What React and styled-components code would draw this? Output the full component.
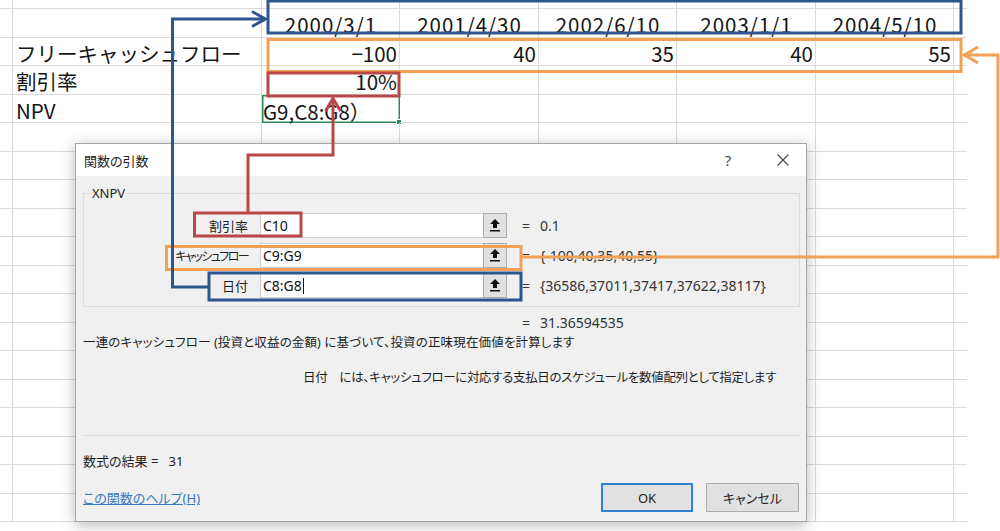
import React from 'react'
import styled, { createGlobalStyle } from 'styled-components'

const GlobalStyle = createGlobalStyle`
  html, body {
    margin: 0;
    padding: 0;
    background: #fff;
  }
  body {
    font-family: "Noto Sans CJK JP", sans-serif;
  }
`

const COLS = [13, 249, 138, 139, 138, 139, 138, 13]
const ROW_COUNT = 19

const Page = styled.div`
  position: relative;
  width: 1000px;
  height: 531px;
  overflow: hidden;
  background: #fff;
`

const Sheet = styled.div`
  display: grid;
  grid-template-columns: ${COLS.map(c => c + 'px').join(' ')};
  grid-template-rows: 9px repeat(${ROW_COUNT - 1}, 28.5px);
  width: 967px;
  font-family: "Noto Sans CJK JP", sans-serif;
  font-size: 20.5px;
  color: #151515;
`

const Cell = styled.div`
  position: relative;
  box-sizing: border-box;
  border-bottom: 1px solid #dadada;
  border-right: ${({ $last }) => ($last ? 'none' : '1px solid #dadada')};
  display: flex;
  align-items: flex-end;
  justify-content: ${({ $align }) =>
    $align === 'right' ? 'flex-end' : $align === 'center' ? 'center' : 'flex-start'};
  padding: 0 2px 2px 3px;
  line-height: 1;
  letter-spacing: ${({ $align }) => ($align === 'center' ? '1px' : '0')};
  white-space: nowrap;
  min-width: 0;
`

const SelectedCell = styled(Cell)`
  border: none;
  box-shadow: inset 0 0 0 1.5px #2f8a55;
  padding-left: 1px;
  &::after {
    content: '';
    position: absolute;
    right: -2px;
    bottom: -2px;
    width: 4px;
    height: 4px;
    background: #2f8a55;
    border: 1px solid #fff;
  }
`

const Dialog = styled.div`
  position: absolute;
  left: 75px;
  top: 143px;
  width: 732px;
  box-sizing: border-box;
  border: 1px solid #a7a7a7;
  background: #f0f0f0;
  box-shadow: 0 3px 14px rgba(0, 0, 0, 0.28);
  font-family: "Noto Sans", "Noto Sans CJK JP", sans-serif;
  font-feature-settings: "palt";
  font-size: 13px;
  color: #1e1e1e;
`

const TitleBar = styled.div`
  display: flex;
  align-items: center;
  height: 32px;
  background: #fff;
  padding-left: 8px;
`

const Title = styled.div`
  flex: 1;
  font-size: 13px;
`

const TitleButton = styled.div`
  width: 46px;
  height: 32px;
  display: flex;
  align-items: center;
  justify-content: center;
  color: #4a4a4a;
  font-size: 15px;
  margin-right: ${({ $gap }) => $gap || 0}px;
`

const Body = styled.div`
  padding: 0 6px 9px 7px;
`

const GroupBox = styled.fieldset`
  margin: 9px 0 0;
  padding: 0 0 8px 0;
  border: 1px solid #dcdcdc;
  min-width: 0;
`

const Legend = styled.legend`
  margin-left: 7px;
  padding: 0 1px;
  line-height: 16px;
  font-size: 13px;
`

const ArgGrid = styled.div`
  margin-top: 12px;
  display: grid;
  grid-template-columns: 176px 223px 24px 33px 1fr;
  grid-auto-rows: 25px;
  row-gap: 5px;
`

const ArgLabel = styled.div`
  display: flex;
  align-items: center;
  justify-content: flex-end;
  padding-right: 12px;
  font-size: ${({ $tight }) => ($tight ? '12px' : '13px')};
  letter-spacing: ${({ $tight }) => ($tight ? '-1.6px' : '0')};
`

const ArgInput = styled.div`
  display: flex;
  align-items: center;
  background: #fff;
  border: 1px solid #cfcfcf;
  border-right: none;
  padding-left: 2px;
  font-size: 14px;
  color: #111;
`

const Caret = styled.span`
  display: inline-block;
  width: 1px;
  height: 16px;
  background: #111;
  margin-left: 1px;
`

const RefButton = styled.div`
  display: flex;
  align-items: center;
  justify-content: center;
  background: #e1e1e1;
  border: 1px solid #adadad;
`

const Equals = styled.div`
  display: flex;
  align-items: center;
  padding-left: 15px;
  font-size: 14px;
  color: #333;
`

const ArgValue = styled.div`
  display: flex;
  align-items: center;
  font-size: 14px;
  color: #333;
  white-space: nowrap;
`

const ResultRow = styled.div`
  margin-top: 7px;
  height: 18px;
  line-height: 18px;
  padding-left: 439px;
  font-size: 14px;
  color: #333;
  span {
    display: inline-block;
    width: 18px;
  }
`

const Desc = styled.div`
  margin-top: ${({ $top }) => $top}px;
  padding-left: ${({ $indent }) => $indent || 0}px;
  height: 18px;
  line-height: 18px;
  font-size: 12.5px;
  letter-spacing: ${({ $spacing }) => $spacing || 0}px;
  white-space: nowrap;
`

const Separator = styled.div`
  margin-top: 48px;
  height: 1px;
  background: #dcdcdc;
`

const FormulaResult = styled.div`
  margin-top: 16px;
  height: 18px;
  line-height: 18px;
  font-size: 13px;
`

const Footer = styled.div`
  margin-top: 13px;
  height: 29px;
  display: flex;
  align-items: center;
  padding-right: 1px;
`

const HelpLink = styled.a`
  flex: 1;
  color: #3a78c2;
  text-decoration: underline;
  font-size: 13px;
`

const Button = styled.div`
  box-sizing: border-box;
  width: ${({ $w }) => $w}px;
  height: 29px;
  display: flex;
  align-items: center;
  justify-content: center;
  background: #e1e1e1;
  border: ${({ $primary }) => ($primary ? '2px solid #2f83d6' : '1px solid #adadad')};
  margin-left: ${({ $gap }) => $gap || 0}px;
  font-size: 13px;
  color: #1e1e1e;
`

const Overlay = styled.svg`
  position: absolute;
  left: 0;
  top: 0;
  width: 1000px;
  height: 531px;
  pointer-events: none;
`

const BLUE = '#2f5590'
const RED = '#b9474a'
const ORANGE = '#f2a055'

const dates = ['2000/3/1', '2001/4/30', '2002/6/10', '2003/1/1', '2004/5/10']
const flows = ['−100', '40', '35', '40', '55']

const sheetRows = Array.from({ length: ROW_COUNT }, (_, r) => {
  const row = Array(8).fill(null)
  if (r === 1) dates.forEach((d, i) => (row[i + 2] = { text: d, align: 'center' }))
  if (r === 2) {
    row[1] = { text: 'フリーキャッシュフロー' }
    flows.forEach((f, i) => (row[i + 2] = { text: f, align: 'right' }))
  }
  if (r === 3) {
    row[1] = { text: '割引率' }
    row[2] = { text: '10%', align: 'right' }
  }
  if (r === 4) {
    row[1] = { text: 'NPV' }
    row[2] = { text: 'G9,C8:G8）', selected: true }
  }
  return row
})

const args = [
  { label: '割引率', ref: 'C10', value: '0.1' },
  { label: 'キャッシュフロー', ref: 'C9:G9', value: '{-100,40,35,40,55}', tight: true },
  { label: '日付', ref: 'C8:G8', value: '{36586,37011,37417,37622,38117}', caret: true },
]

function RefIcon() {
  return (
    <svg width="10" height="13" viewBox="0 0 10 13">
      <path d="M5 0 L10 5 L7 5 L7 9 L3 9 L3 5 L0 5 Z" fill="#111" />
      <rect x="0" y="11" width="10" height="1.5" fill="#111" />
    </svg>
  )
}

function CloseIcon() {
  return (
    <svg width="12" height="12" viewBox="0 0 12 12">
      <path d="M0.5 0.5 L11.5 11.5 M11.5 0.5 L0.5 11.5" stroke="#444" strokeWidth="1.1" />
    </svg>
  )
}

function Annotations() {
  const line = { fill: 'none', strokeWidth: 3 }
  return (
    <Overlay viewBox="0 0 1000 531">
      <rect x="268" y="1" width="693" height="32" stroke={BLUE} {...line} />
      <rect x="268" y="39.5" width="693" height="32" stroke={ORANGE} {...line} />
      <rect x="268" y="73" width="131" height="23" stroke={RED} {...line} />

      <rect x="194.5" y="213" width="106.5" height="23" stroke={RED} {...line} />
      <rect x="166.5" y="246.5" width="354.5" height="23" stroke={ORANGE} {...line} />
      <rect x="209" y="273" width="312" height="27" stroke={BLUE} {...line} />

      <path d="M209 287 H172.5 V19 H265" stroke={BLUE} {...line} />
      <path d="M252 11.5 L265.5 19 L252 26.5" stroke={BLUE} {...line} />

      <path d="M248 212 V155 H333 V100" stroke={RED} {...line} />
      <path d="M325.5 111 L333 98.5 L340.5 111" stroke={RED} {...line} />

      <path d="M522 257 H998 V55 H966" stroke={ORANGE} {...line} />
      <path d="M978 47 L964.5 55 L978 63" stroke={ORANGE} {...line} />
    </Overlay>
  )
}

export default function App() {
  return (
    <Page>
      <GlobalStyle />
      <Sheet>
        {sheetRows.map((row, r) =>
          row.map((cell, c) => {
            const key = `${r}-${c}`
            if (cell && cell.selected) {
              return <SelectedCell key={key}>{cell.text}</SelectedCell>
            }
            return (
              <Cell key={key} $last={c === COLS.length - 1} $align={cell && cell.align}>
                {cell && cell.text}
              </Cell>
            )
          })
        )}
      </Sheet>

      <Dialog>
        <TitleBar>
          <Title>関数の引数</Title>
          <TitleButton $gap={9}>?</TitleButton>
          <TitleButton>
            <CloseIcon />
          </TitleButton>
        </TitleBar>
        <Body>
          <GroupBox>
            <Legend>XNPV</Legend>
            <ArgGrid>
              {args.map(a => (
                <React.Fragment key={a.label}>
                  <ArgLabel $tight={a.tight}>{a.label}</ArgLabel>
                  <ArgInput>
                    {a.ref}
                    {a.caret && <Caret />}
                  </ArgInput>
                  <RefButton>
                    <RefIcon />
                  </RefButton>
                  <Equals>=</Equals>
                  <ArgValue>{a.value}</ArgValue>
                </React.Fragment>
              ))}
            </ArgGrid>
          </GroupBox>
          <ResultRow>
            <span>=</span>31.36594535
          </ResultRow>
          <Desc $top={2} $spacing={0.15}>
            一連のキャッシュフロー (投資と収益の金額) に基づいて、投資の正味現在価値を計算します
          </Desc>
          <Desc $top={17} $indent={220} $spacing={-0.35}>
            日付　には、キャッシュフローに対応する支払日のスケジュールを数値配列として指定します
          </Desc>
          <Separator />
          <FormulaResult>数式の結果 =&nbsp;&nbsp;&nbsp;31</FormulaResult>
          <Footer>
            <HelpLink>この関数のヘルプ(H)</HelpLink>
            <Button $w={92} $primary>OK</Button>
            <Button $w={93} $gap={13}>キャンセル</Button>
          </Footer>
        </Body>
      </Dialog>

      <Annotations />
    </Page>
  )
}
